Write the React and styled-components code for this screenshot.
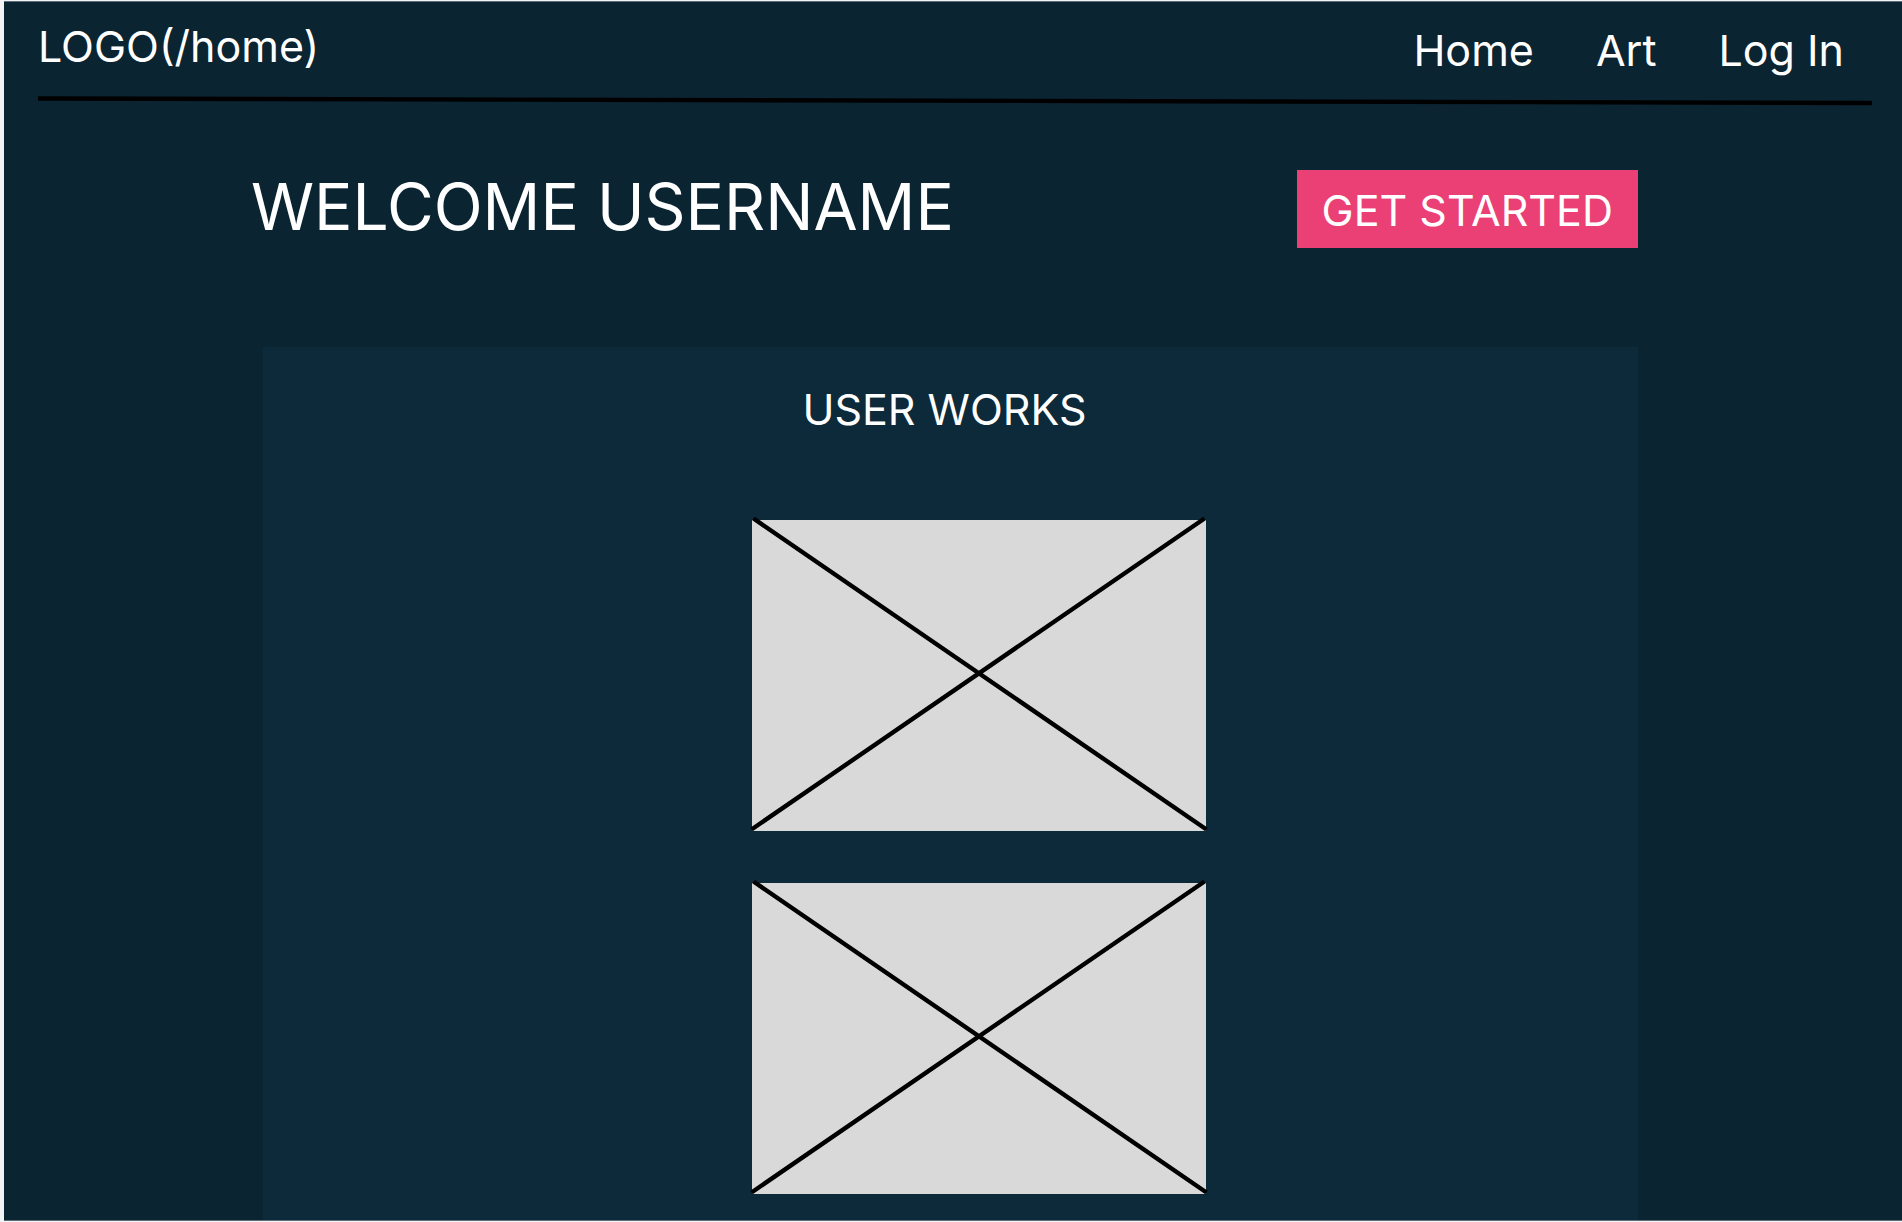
import React from "react";
import styled, { createGlobalStyle } from "styled-components";

const GlobalStyle = createGlobalStyle`
  *, *::before, *::after { box-sizing: border-box; }
  body {
    margin: 0;
    background: #f3f4f5;
    color: #ffffff;
    font-family: Inter, "Liberation Sans", sans-serif;
    font-size: 43px;
    line-height: 56px;
  }
`;

const Page = styled.div`
  display: flex;
  flex-direction: column;
  min-height: calc(100vh - 2px);
  margin: 1px 0 1px 4px;
  background: #0b2432;
  border-top: 1px solid #5c6f79;
  border-bottom: 1px solid #5c6f79;
`;

const Header = styled.header`
  padding: 16px 30px 0 34px;
`;

const Bar = styled.div`
  display: flex;
  justify-content: space-between;
  align-items: flex-start;
`;

const TextLink = styled.a`
  color: inherit;
  text-decoration: none;
  white-space: nowrap;
`;

const Nav = styled.nav`
  display: flex;
  gap: 62px;
  padding: 4px 28px 0 0;
`;

const Rule = styled.svg`
  display: block;
  width: 100%;
  height: 10px;
  margin-top: 18px;
`;

const Main = styled.main`
  display: flex;
  flex: 1;
  flex-direction: column;
  padding: 64px 264px 0 247px;
`;

const Hero = styled.section`
  display: flex;
  justify-content: space-between;
  align-items: flex-start;
`;

const Heading = styled.h1`
  margin: 0;
  font-size: 64px;
  font-weight: 400;
  line-height: 74px;
`;

const Action = styled.button`
  padding: 12px 25px 10px;
  border: 0;
  background: #eb4076;
  color: inherit;
  font: inherit;
  white-space: nowrap;
  cursor: pointer;
`;

const Panel = styled.section`
  flex: 1;
  margin: 99px 0 0 12px;
  padding: 34px 0 26px;
  background: #0d2a3b;
`;

const PanelTitle = styled.h2`
  margin: 0;
  padding-right: 12px;
  font-size: inherit;
  font-weight: 400;
  text-align: center;
`;

const Works = styled.div`
  display: grid;
  justify-content: center;
  gap: 52px;
  margin-top: 83px;
  padding-left: 56px;
`;

const Placeholder = styled.svg`
  display: block;
  width: 454px;
  height: 311px;
  overflow: visible;
  background: #d9d9d9;
`;

const works = ["First work", "Second work"];

function Work({ label }) {
  return (
    <Placeholder viewBox="0 0 454 311" role="img" aria-label={label}>
      <path d="M1.5-1.5 454.5 309.5M452.5-1.5-.5 309.5" stroke="#000" strokeWidth="4.4" />
    </Placeholder>
  );
}

export default function App() {
  return (
    <>
      <GlobalStyle />
      <Page>
        <Header>
          <Bar>
            <TextLink href="/home">LOGO(/home)</TextLink>
            <Nav>
              <TextLink href="/home">Home</TextLink>
              <TextLink href="/art">Art</TextLink>
              <TextLink href="/login">Log In</TextLink>
            </Nav>
          </Bar>
          <Rule aria-hidden="true">
            <line x1="0" y1="2.5" x2="100%" y2="7" stroke="#000" strokeWidth="4.4" />
          </Rule>
        </Header>
        <Main>
          <Hero>
            <Heading>WELCOME USERNAME</Heading>
            <Action type="button">GET STARTED</Action>
          </Hero>
          <Panel>
            <PanelTitle>USER WORKS</PanelTitle>
            <Works>
              {works.map((label) => (
                <Work key={label} label={label} />
              ))}
            </Works>
          </Panel>
        </Main>
      </Page>
    </>
  );
}
